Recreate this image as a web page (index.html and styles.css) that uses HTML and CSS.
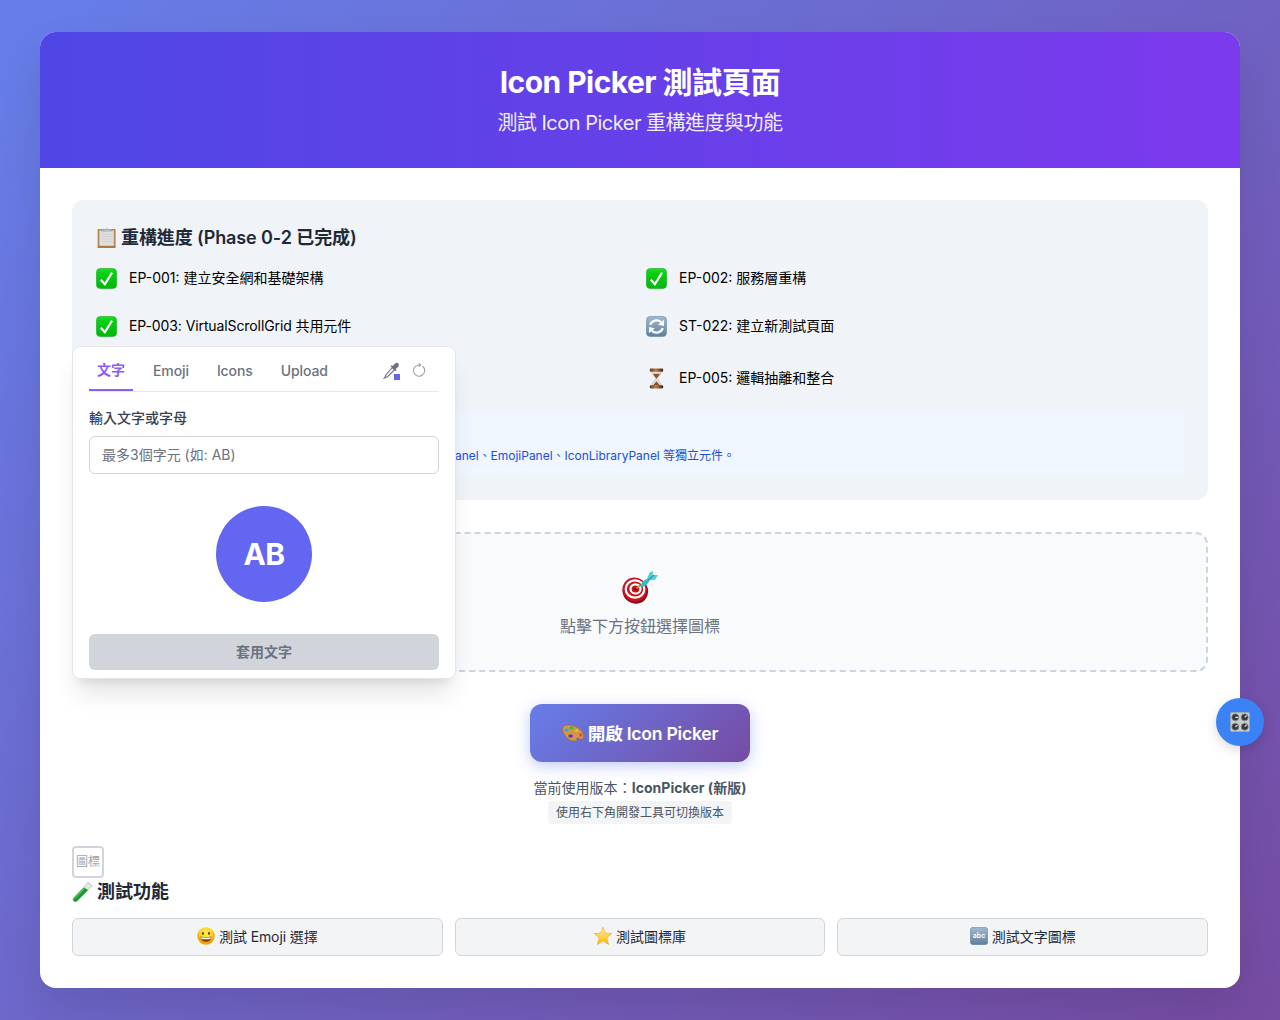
FILE: index.html
```html
<!DOCTYPE html>
<html lang="zh-Hant">
<head>
<meta charset="utf-8">
<title>Icon Picker 測試頁面</title>
<link rel="stylesheet" href="styles.css">
</head>
<body>
<svg class="defs" aria-hidden="true">
  <defs>
    <linearGradient id="green" x2="0" y2="1"><stop stop-color="#1fe02a"/><stop offset=".25" stop-color="#06cf10"/><stop offset="1" stop-color="#00b80c"/></linearGradient>
    <linearGradient id="steel" x2="0" y2="1"><stop stop-color="#a3bad0"/><stop offset="1" stop-color="#5c7f9e"/></linearGradient>
    <linearGradient id="wood" x2="1" y2="0"><stop stop-color="#5e3518"/><stop offset=".45" stop-color="#bd8046"/><stop offset="1" stop-color="#3f2110"/></linearGradient>
    <linearGradient id="gold" x2="0" y2="1"><stop stop-color="#fff6a0"/><stop offset="1" stop-color="#ffb400"/></linearGradient>
    <radialGradient id="face" cy=".35"><stop stop-color="#fff04e"/><stop offset=".7" stop-color="#ffd42f"/><stop offset="1" stop-color="#f3a111"/></radialGradient>
    <symbol id="check" viewBox="0 0 22 22"><rect x=".5" y=".5" width="21" height="21" rx="4" fill="url(#green)" stroke="#10a617" stroke-width=".6"/><path d="M5 12.2 9.3 17 16.8 4.8" fill="none" stroke="#fff" stroke-width="2.3"/></symbol>
  </defs>
</svg>
<main class="card">
  <header class="hero">
    <h1>Icon Picker 測試頁面</h1>
    <p>測試 Icon Picker 重構進度與功能</p>
  </header>
  <div class="content">
    <section class="progress">
      <h2>
        <svg class="e22" viewBox="0 0 22 22"><rect x="1.6" y="2" width="18" height="18.600" rx="1" fill="#b98746"/><path d="M1.600 20.200h18" stroke="#8b602c"/><path d="M3.400 3.400h14.400v15.400H3.400z" fill="#dedede"/><path d="M5.500 7h10M5.500 9.500h10M5.500 12h10M5.500 14.500h10" stroke="#cfcfcf" stroke-width=".9"/><path d="M5.600 4.200V2.600h3.200Q10.600.2 12.400 2.600h3.200v1.600z" fill="#b8c0c6" stroke="#8e989f" stroke-width=".4"/></svg>
        <span class="phase">重構進度 (Phase 0-2 已完成)</span>
      </h2>
      <div class="steps">
        <div class="step"><svg><use href="#check"/></svg><span>EP-001: 建立安全網和基礎架構</span></div>
        <div class="step"><svg><use href="#check"/></svg><span>EP-002: 服務層重構</span></div>
        <div class="step"><svg><use href="#check"/></svg><span class="tight">EP-003: VirtualScrollGrid 共用元件</span></div>
        <div class="step"><svg viewBox="0 0 22 22"><rect x=".5" y=".5" width="21" height="21" rx="4" fill="url(#steel)" stroke="#64839f" stroke-width=".6"/><path d="M4.400 9.300A7 6.600 0 0 1 15.800 6.400M17.600 12.700A7 6.600 0 0 1 6.200 15.600" fill="none" stroke="#fff" stroke-width="2.300"/><path d="M18.900 3.800v6.600l-6.200-1.200zM3.100 18.200v-6.600l6.200 1.200z" fill="#fff"/></svg><span>ST-022: 建立新測試頁面</span></div>
        <div class="step"></div>
        <div class="step"><svg viewBox="0 0 22 22"><path d="M6 3c0 5 4.100 6 4.100 8S6 14.500 6 19h10c0-4.500-4.100-6-4.100-8S16 8 16 3z" fill="#e6e3de" stroke="#b4aea5" stroke-width=".6"/><path d="M7.500 6h7c-.6 2.300-2.700 3.500-3.200 5h-.6C10.200 9.500 8.100 8.300 7.500 6zM11 14l4 4.500H7z" fill="#8f562c"/><rect x="4" y=".6" width="14" height="3.400" rx="1.200" fill="url(#wood)"/><rect x="4" y="18" width="14" height="3.400" rx="1.200" fill="url(#wood)"/></svg><span>EP-005: 邏輯抽離和整合</span></div>
      </div>
      <div class="note"><p>TextPanel、EmojiPanel、IconLibraryPanel 等獨立元件。</p></div>
    </section>
    <section class="preview">
      <svg class="e36" viewBox="0 0 36 36"><ellipse cx="13.300" cy="21" rx="13" ry="12.500" transform="rotate(35 13.300 21)" fill="#8e0d16"/><ellipse cx="12.700" cy="19.500" rx="12.300" ry="11.800" transform="rotate(35 12.700 19.500)" fill="#c9151f"/><g fill="none" stroke="#fff" stroke-width="2.200"><ellipse cx="13" cy="19" rx="9.300" ry="8.700"/><ellipse cx="13.500" cy="18.900" rx="5" ry="4.600"/></g><circle cx="14" cy="18.700" r="1.700" fill="#7b0d13"/><path d="M14.500 18.300 19 15" stroke="#c99d21" stroke-width="2"/><path d="M18 16.500q1-4.500 7.500-8l2.200 2q-2.700 5.500-8.500 6.800z" fill="#37b9c8"/><path d="m25 9 2.600-6.400 3.700-1.500-.7 4 5.200-.2-2.400 4.500-7 1.400z" fill="#52ccd5"/><path d="m26 10.200 6-5.200" stroke="#187c8d"/></svg>
      <p>點擊下方按鈕選擇圖標</p>
    </section>
    <div class="launcher">
      <button class="open"><svg class="e22" viewBox="0 0 22 22"><path d="M.6 7C.6 2.700 5.500 2.600 10 3.600c6 1.300 11.500 5.400 11.500 10 0 2.700-1.300 4.300-3.300 3.400-1.200-.6-2-1.700-3-1-.9.700.6 2.200-1.700 2.800-3.400.8-7.100-.9-9.600-4C2 12.500.6 9.700.6 7z" fill="#d3974a" stroke="#9c6822" stroke-width=".6"/><ellipse cx="4.800" cy="8" rx="2" ry="1.500" fill="#25a9e4"/><ellipse cx="9.500" cy="6" rx="2.200" ry="1.500" fill="#36bd31"/><ellipse cx="8.600" cy="14" rx="2.300" ry="1.700" fill="#702fb6"/><ellipse cx="14.500" cy="8.600" rx="1.700" ry="1.200" fill="#f0c92b"/><ellipse cx="18.600" cy="13" rx="1.500" ry="1.700" fill="#e44246"/></svg><span>開啟 Icon Picker</span></button>
      <p class="version">當前使用版本：<strong>IconPicker (新版)</strong></p>
      <span class="hint">使用右下角開發工具可切換版本</span>
    </div>
    <div class="thumb">圖標</div>
    <section class="tests">
      <h2><svg class="e22" viewBox="0 0 22 22"><path d="M16.300 1.300 20.300 4.800 5.200 20.300q-2 1.500-3.700 0-1.500-1.700 0-3.600z" fill="#dfe9e2" stroke="#a5b4aa" stroke-width=".6"/><path d="M12 6.600 16 9 5 20q-1.800 1.200-3.200 0-1.100-1.500.1-3z" fill="#109b2b"/><path d="M12.500 7.300 3.200 17.500" stroke="#5ddd67"/><path d="m15.400 1 5.200 4.600" stroke="#d2dcd5" stroke-width="1.800"/></svg><span>測試功能</span></h2>
      <div class="actions">
        <button><svg class="e18" viewBox="0 0 18 18"><circle cx="9" cy="9" r="8.700" fill="url(#face)"/><ellipse cx="6" cy="6.500" rx="1" ry="1.400" fill="#65400e"/><ellipse cx="12" cy="6.500" rx="1" ry="1.400" fill="#65400e"/><path d="M3.500 9.500q5.500 1 11 0-.5 5.300-5.500 5.300T3.500 9.500z" fill="#78450e"/><path d="M4.100 10.200q4.900.8 9.800 0l-.5 1.700q-4.400.7-8.800 0z" fill="#fff"/></svg><span class="tight">測試 Emoji 選擇</span></button>
        <button><svg class="e18" viewBox="0 0 18 18"><path d="m9 .3 2.300 5.900 6.500.4-5 4.100 1.700 6.700L9 13.800l-5.500 3.600 1.700-6.700-5-4.100 6.500-.4z" fill="url(#gold)" stroke="#ecac22" stroke-width=".7"/></svg><span>測試圖標庫</span></button>
        <button><svg class="e18" viewBox="0 0 18 18"><rect x=".3" y=".3" width="17.400" height="17.400" rx="3" fill="url(#steel)" stroke="#64839f" stroke-width=".6"/><text x="9" y="11.300" text-anchor="middle" class="abc">abc</text></svg><span>測試文字圖標</span></button>
      </div>
    </section>
  </div>
</main>

<aside class="popover">
  <nav class="tabs">
    <span class="tab active">文字</span><span class="tab">Emoji</span><span class="tab">Icons</span><span class="tab">Upload</span>
    <div class="tools">
      <span class="picker"><svg width="18" height="18" viewBox="0 0 18 18"><path d="m10.300 5.500 2.200 2.200-7 7-2.700 1 1-2.700z" fill="none" stroke="#6b7280" stroke-width="1.100"/><path d="m1.300 16.700 1.700-1.500" stroke="#6b7280"/><path d="m8.600 4.300 1.200-1 .9.700 2.200-2.300q1.900-1.700 3.400-.1 1.400 1.600-.3 3.300l-2.300 2.100.8 1-1.100 1.300z" fill="#6b7280"/></svg><i></i></span>
      <svg class="reset" width="14" height="14" viewBox="0 0 14 14" fill="none" stroke="#9ca3af" stroke-width="1.100"><path d="M10.300 3A5.600 5.600 0 1 1 7 2H8.500M6.700.200 8.700 2 6.700 3.900"/></svg>
    </div>
  </nav>
  <label for="letters">輸入文字或字母</label>
  <input id="letters" placeholder="最多3個字元 (如: AB)">
  <div class="avatar">AB</div>
  <button class="apply">套用文字</button>
</aside>

<div class="fab"><svg width="20" height="20" viewBox="0 0 20 20"><rect x=".3" y=".3" width="19.400" height="19.400" rx="1.500" fill="#c9cccd" stroke="#8f989b" stroke-width=".6"/><g fill="#34383b" stroke="#888e91" stroke-width=".7"><circle cx="5.300" cy="5.300" r="3.500"/><circle cx="14.700" cy="5.300" r="3.500"/><circle cx="5.300" cy="14.700" r="3.500"/><circle cx="14.700" cy="14.700" r="3.500"/></g><path d="M5.300 5.300H8M14.700 5.300l2-2M5.300 14.700l2.200-1.500M14.700 14.700l2-2" stroke="#e7e9ea" stroke-width="1.200"/></svg></div>
</body>
</html>
```
FILE: styles.css
```css
* { box-sizing: border-box; margin: 0; padding: 0; }
body {
  position: relative;
  min-height: 1020px;
  padding: 32px 40px;
  font-family: Inter, "Noto Sans CJK TC", sans-serif;
  background: linear-gradient(135deg, #667eea 0%, #764ba2 100%);
  color: #000;
  line-height: 1.5;
  white-space: nowrap;
}
button, input { font-family: inherit; }
svg { display: block; flex: none; }
.defs { position: absolute; width: 0; height: 0; }
.e18 { width: 18px; height: 18px; }
.e22 { width: 22px; height: 22px; }
.e36 { width: 36px; height: 36px; }
.tight { letter-spacing: -.1px; }

.card { height: 956px; border-radius: 16px; background: #fff; overflow: hidden; box-shadow: 0 20px 40px rgba(0, 0, 0, .1); }
.hero { height: 136px; padding-top: 32px; text-align: center; color: #fff; background: linear-gradient(90deg, #4f46e5, #7c3aed); }
.hero h1 { font-size: 30px; line-height: 36px; letter-spacing: -.55px; }
.hero p { margin-top: 9px; font-size: 20px; line-height: 28px; letter-spacing: -.5px; opacity: .9; }
.content { padding: 32px; }

.progress { height: 300px; padding: 24px; border-radius: 12px; background: #f0f4f8; }
h2 { display: flex; align-items: center; gap: 3px; font-size: 18px; line-height: 28px; font-weight: 600; color: #1f2937; }
.phase { letter-spacing: -.1px; }
.steps { display: grid; grid-template-columns: 1fr 1fr; grid-template-rows: 36px 36px 44px; gap: 12px; margin-top: 8px; }
.step { display: flex; align-items: center; gap: 12px; font-size: 14px; }
.step svg { width: 21px; height: 21px; }
.step span { padding-bottom: 2px; }
.note { height: 64px; margin-top: 12px; padding-top: 35px; border-radius: 8px; background: #eff6ff; }
.note p { width: 639px; text-align: right; font-size: 12px; line-height: 18px; letter-spacing: -.02px; color: #1d4ed8; }

.preview { display: flex; flex-direction: column; align-items: center; height: 140px; margin-top: 32px; padding-top: 36px; border: 2px dashed #cbd5e1; border-radius: 12px; background: #f8fafc; color: #6b7280; }
.preview p { margin-top: 8px; font-size: 16px; line-height: 24px; }

.launcher { display: flex; flex-direction: column; align-items: center; margin-top: 32px; }
.open { display: flex; align-items: center; justify-content: center; gap: 4px; width: 220px; height: 58px; border: 0; border-radius: 12px; font-size: 17.6px; font-weight: 600; letter-spacing: -.25px; color: #fff; background: linear-gradient(135deg, #667eea, #764ba2); box-shadow: 0 4px 15px rgba(102, 126, 234, .4); }
.open span { padding-bottom: 2px; }
.version { margin-top: 16px; font-size: 14px; line-height: 20px; letter-spacing: .04px; color: #4b5563; }
.hint { margin-top: 3px; padding: 0 8px; height: 23px; border-radius: 4px; font-size: 12px; line-height: 23px; color: #4b5563; background: #f3f4f6; }
.thumb { width: 32px; height: 32px; margin-top: 22px; border: 2px solid #d1d5db; border-radius: 4px; font-size: 12px; line-height: 28px; text-align: center; color: #9ca3af; }
.actions { display: grid; grid-template-columns: repeat(3, 1fr); gap: 12px; margin-top: 12px; }
.actions button { display: flex; align-items: center; justify-content: center; gap: 4px; height: 38px; padding-bottom: 2px; border: 1px solid #d1d5db; border-radius: 6px; font-size: 14px; color: #1f2937; background: #f3f4f6; }
.abc { font: 600 7px Inter, sans-serif; fill: #fff; }

.popover { position: absolute; left: 72px; top: 346px; display: flex; flex-direction: column; width: 384px; height: 333px; padding: 8px 16px; border: 1px solid #e5e7eb; border-radius: 8px; background: #fff; box-shadow: 0 20px 25px -5px rgba(0, 0, 0, .1), 0 8px 10px -6px rgba(0, 0, 0, .1); }
.tabs { display: flex; gap: 12px; height: 37px; border-bottom: 1px solid #e5e7eb; }
.tab { height: 36px; padding: 0 8px; font-size: 14px; line-height: 32px; font-weight: 500; letter-spacing: -.1px; color: #6b7280; }
.tab.active { border-bottom: 2px solid #8b5cf6; font-weight: 600; line-height: 30px; letter-spacing: 0; color: #8b5cf6; }
.tools { display: flex; gap: 12px; margin-left: auto; padding: 7px 13px 0 0; }
.picker { position: relative; width: 18px; height: 18px; }
.picker i { position: absolute; left: 12px; top: 12px; width: 6px; height: 6px; background: #6366f1; }
.reset { margin-top: 1px; }
.popover label { margin-top: 16px; font-size: 14px; line-height: 20px; font-weight: 500; color: #374151; }
.popover input { height: 38px; margin-top: 8px; padding: 0 12px 2px; border: 1px solid #d1d5db; border-radius: 6px; font-size: 14px; background: #fff; }
.popover input::placeholder { color: #6b7280; opacity: 1; }
.avatar { display: flex; align-items: center; justify-content: center; align-self: center; width: 96px; height: 96px; margin-top: 32px; border-radius: 50%; font-size: 30px; font-weight: 700; letter-spacing: -.6px; color: #fff; background: #6366f1; }
.apply { height: 36px; margin-top: 32px; padding-bottom: 2px; border: 0; border-radius: 6px; font-size: 14px; font-weight: 600; color: #6b7280; background: #d1d5db; }

.fab { position: absolute; left: 1216px; top: 698px; display: flex; align-items: center; justify-content: center; width: 48px; height: 48px; border-radius: 50%; background: #3b82f6; box-shadow: 0 4px 12px rgba(0, 0, 0, .15); }
```
